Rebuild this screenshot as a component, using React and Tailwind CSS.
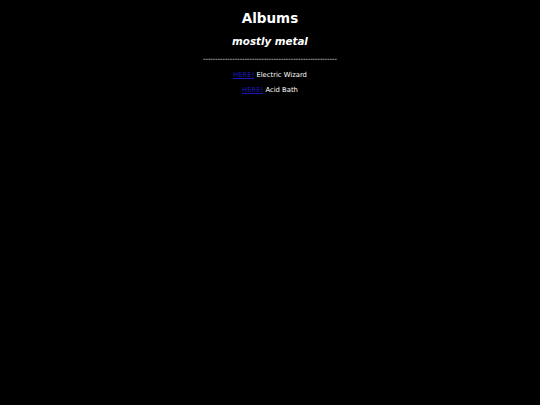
export default function App() {
  const dashes = "-".repeat(55);
  const albums = ["Electric Wizard", "Acid Bath"];

  return (
    <div
      className="h-[405px] w-full bg-black text-center text-white"
      style={{ fontFamily: '"DejaVu Sans", Verdana, sans-serif' }}
    >
      <h1 className="pt-[10px] text-[13.5px] font-bold leading-[16px]">Albums</h1>
      <h2 className="mt-[9.4px] text-[10.3px] font-bold italic leading-[12px]">mostly metal</h2>
      <div className="mt-[7.5px] text-[6.75px] leading-[8px] text-white">{dashes}</div>
      <ul className="mt-[7.7px] flex flex-col gap-[7px] text-[6.8px] leading-[8px]">
        {albums.map((name) => (
          <li key={name}>
            <a href="#" className="text-[#1a1ab8] underline">
              HERE!
            </a>{" "}
            {name}
          </li>
        ))}
      </ul>
    </div>
  );
}
